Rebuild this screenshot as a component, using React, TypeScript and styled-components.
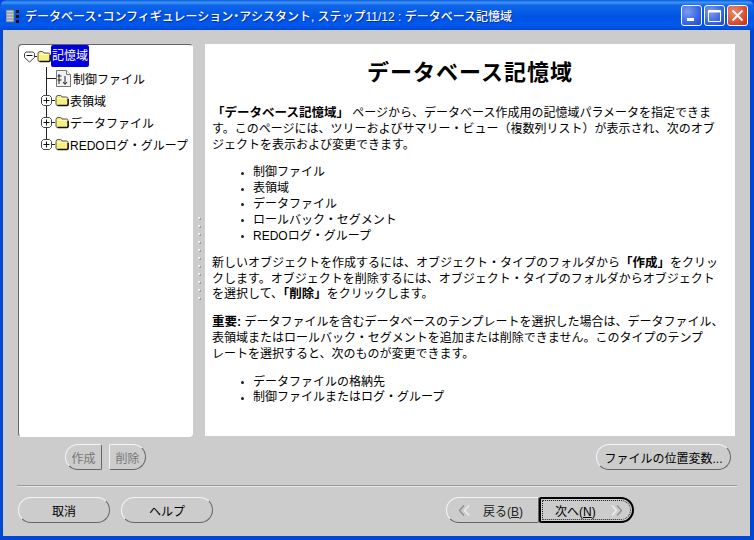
import React from 'react';
import styled, { createGlobalStyle } from 'styled-components';

const GlobalStyle = createGlobalStyle`
  html, body {
    margin: 0;
    padding: 0;
    background: #cccccc;
  }
  body {
    font-family: "Liberation Sans", "Noto Sans CJK JP", sans-serif;
    font-size: 12px;
    color: #000;
  }
`;

const Win = styled.div`
  width: 754px;
  height: 540px;
  display: flex;
  flex-direction: column;
  overflow: hidden;
  background: #0047d6;
`;

const TitleBar = styled.div`
  flex: 0 0 30px;
  display: flex;
  align-items: center;
  padding: 1px 6px 0 6px;
  box-sizing: border-box;
  border-radius: 7px 7px 0 0;
  background: linear-gradient(180deg, #0a5be0 0, #3f94f5 8%, #0f66ea 18%, #0054e3 55%, #0058ee 85%, #0048d0 100%);
`;

const TitleText = styled.div`
  flex: 1;
  margin-left: 5px;
  color: #fff;
  font-size: 12px;
  font-weight: 500;
  white-space: nowrap;
  text-shadow: 1px 1px 0 #0a2f9c;
`;

const TitleDot = styled.span`
  font-feature-settings: "palt";
`;

const WinButtons = styled.div`
  display: flex;
  gap: 2px;
`;

const WinButton = styled.div<{ $close?: boolean }>`
  width: 21px;
  height: 21px;
  box-sizing: border-box;
  border: 1px solid #fff;
  border-radius: 3px;
  display: flex;
  align-items: center;
  justify-content: center;
  background: ${(p) =>
    p.$close
      ? 'radial-gradient(circle at 30% 30%, #ee8a6a, #d2472a 70%, #b83214)'
      : 'radial-gradient(circle at 30% 30%, #7a9cf0, #2f5ee0 70%, #2248c8)'};
`;

const Frame = styled.div`
  flex: 1;
  margin: 0 4px 4px 3px;
  background: #cccccc;
  display: flex;
  flex-direction: column;
  padding: 14px 12px 0 15px;
  min-height: 0;
`;

const Panes = styled.div`
  flex: 0 0 393px;
  display: flex;
  min-height: 0;
`;

const TreePane = styled.div`
  flex: 0 0 175px;
  box-sizing: border-box;
  background: #fff;
  border: 1px solid #fff;
  border-top-color: #666;
  border-left-color: #666;
  border-radius: 4px;
  padding: 0 0 0 5px;
  overflow: hidden;
`;

const TreeRow = styled.div`
  height: 22px;
  display: flex;
  align-items: center;
  white-space: nowrap;
  font-size: 12px;
`;

const SelectedLabel = styled.span`
  background: #0000e0;
  color: #fff;
  height: 22px;
  line-height: 22px;
  padding: 0 1px;
  border-radius: 2px;
`;

const TreeLabel = styled.span<{ $gap?: number }>`
  margin-left: ${(p) => p.$gap ?? 1}px;
`;

const VGuide = styled.div`
  height: 77px;
  border-left: 1px solid #222;
  margin-left: 22px;
`;

const ChildRow = styled(TreeRow)`
  margin-left: -6px;
`;

const FileRow = styled(TreeRow)`
  margin-left: 0;
`;

const Splitter = styled.div`
  flex: 0 0 12px;
  display: flex;
  flex-direction: column;
  align-items: center;
  justify-content: center;
  gap: 6px;
  padding-top: 34px;
`;

const Dot = styled.span`
  width: 2px;
  height: 2px;
  background: #eeeeee;
  box-shadow: 1px 1px 0 #999;
`;

const HelpPane = styled.div`
  flex: 0 0 530px;
  box-sizing: border-box;
  height: 392px;
  background: #fff;
  padding: 14px 7px 0 7px;
  overflow: hidden;
`;

const Heading = styled.h1`
  margin: 0 0 18px 0;
  font-size: 22px;
  line-height: 30px;
  font-weight: bold;
  text-align: center;
  letter-spacing: 1px;
`;

const Para = styled.p`
  margin: 0 0 12px 0;
  font-size: 12px;
  line-height: 15.8px;
  white-space: nowrap;
  b {
    font-size: 12.5px;
  }
`;

const List = styled.ul`
  margin: 0 0 11.5px 0;
  padding: 0 0 0 29px;
  list-style: none;
  font-size: 12px;
  line-height: 15.8px;
`;

const ListItem = styled.li`
  display: flex;
  align-items: center;
  gap: 9px;
  &::before {
    content: '';
    width: 3px;
    height: 3px;
    border-radius: 50%;
    background: #222;
  }
`;

const ToolRow = styled.div`
  flex: 0 0 26px;
  margin-top: 7px;
  display: flex;
  align-items: center;
  padding-left: 47px;
  padding-right: 7px;
`;

const Spacer = styled.div`
  flex: 1;
`;

const Btn = styled.div<{ $w: number; $side?: 'leftOnly' | 'rightOnly'; $off?: boolean }>`
  width: ${(p) => p.$w}px;
  height: 26px;
  box-sizing: border-box;
  display: flex;
  align-items: center;
  justify-content: center;
  white-space: nowrap;
  font-size: 12px;
  color: ${(p) => (p.$off ? '#777' : '#000')};
  background: #cccccc;
  border: 1px solid;
  border-color: #f4f4f4 #666 #666 #f4f4f4;
  border-radius: ${(p) =>
    p.$side === 'leftOnly' ? '13px 2px 2px 13px' : p.$side === 'rightOnly' ? '2px 13px 13px 2px' : '13px'};
`;

const SmallGap = styled.div`
  width: 7px;
`;

const Divider = styled.div`
  flex: 0 0 2px;
  margin: 15px 0 0 -1px;
  width: 720px;
  background: #999999;
  border-bottom: 1px solid #e4e4e4;
  box-sizing: border-box;
`;

const FooterRow = styled.div`
  flex: 0 0 26px;
  margin-top: 10px;
  display: flex;
  align-items: center;
`;

const FooterGap = styled.div`
  width: 11px;
`;

const NavGroup = styled.div`
  display: flex;
  margin-right: 104px;
`;

const NextBtn = styled(Btn)`
  border: 2px solid #000;
  padding: 1px;
`;

const FocusRing = styled.div`
  flex: 1;
  height: 100%;
  border: 1px dotted #222;
  border-radius: 1px 10px 10px 1px;
  display: flex;
  align-items: center;
  justify-content: space-between;
  padding: 0 7px 0 12px;
  box-sizing: border-box;
`;

const BackInner = styled.div`
  flex: 1;
  display: flex;
  align-items: center;
  justify-content: space-between;
  padding: 0 15px 0 11px;
  color: #222;
`;

const Mnemonic = styled.span`
  text-decoration: underline;
`;

const Expander = ({ minus, width }: { minus?: boolean; width: number }) => (
  <svg width={width} height="13" viewBox={`0 0 ${width} 13`} style={{ flex: 'none' }}>
    <line x1="10" y1="6.5" x2={width} y2="6.5" stroke="#222" />
    <path
      d={minus ? 'M0.5 3.5l1.5-1.5h7l1.5 1.5v4l-5 4.5-5-4.5z' : 'M0.5 3.5l2-2h6l2 2v6l-2 2h-6l-2-2z'}
      fill="#fff"
      stroke="#444"
    />
    <line x1="2.5" y1={minus ? 5.5 : 6.5} x2="8.5" y2={minus ? 5.5 : 6.5} stroke="#111" />
    {!minus && <line x1="5.5" y1="3.5" x2="5.5" y2="9.5" stroke="#111" />}
  </svg>
);

const Folder = () => (
  <svg width="14" height="13" viewBox="0 0 14 13" style={{ flex: 'none' }}>
    <path
      d="M1 3.5q0-2 2-2h2.5q1 0 1.5 1.5h4.5q1.5 0 1.5 1.5v5.5q0 1.5-1.5 1.5h-9q-1.5 0-1.5-1.5z"
      fill="#f8f07c"
      stroke="#555"
    />
    <path d="M2.5 11.5h9.5q1.2 0 1.2-1.5v-5" fill="none" stroke="#111" strokeWidth="1.4" />
    <path d="M2.5 4.5h8.5" stroke="#fffccf" />
  </svg>
);

const FileIcon = () => (
  <svg width="15" height="17" viewBox="0 0 15 17" style={{ flex: 'none' }}>
    <path d="M0.5 0.5h10l4 4v12h-14z" fill="#f2f2f2" stroke="#777" />
    <path d="M10.5 0.5v4h4" fill="#fff" stroke="#777" />
    <path d="M3 4v10M5.5 6h-4M5.5 10h-4M9 6v8M7 12l2 2.5 2-2.5" fill="none" stroke="#222" />
  </svg>
);

const HLine = ({ w }: { w: number }) => (
  <svg width={w} height="3" viewBox={`0 0 ${w} 3`} style={{ flex: 'none' }}>
    <line x1="0" y1="1.5" x2={w} y2="1.5" stroke="#222" />
  </svg>
);

const Chevrons = ({ left }: { left?: boolean }) => (
  <svg width="13" height="13" viewBox="0 0 13 13" style={{ flex: 'none' }}>
    <g transform={left ? undefined : 'matrix(-1 0 0 1 13 0)'} fill="none" stroke="#8f8f8f" strokeWidth="1.3">
      <path d="M6 1.5L1.5 6.5 6 11.5" />
      <path d="M11 1.5L6.5 6.5 11 11.5" stroke="#f0f0f0" />
    </g>
  </svg>
);

const bullets1 = ['制御ファイル', '表領域', 'データファイル', 'ロールバック・セグメント', 'REDOログ・グループ'];
const bullets2 = ['データファイルの格納先', '制御ファイルまたはログ・グループ'];
const folders = ['表領域', 'データファイル', 'REDOログ・グループ'];

export default function App() {
  return (
    <>
      <GlobalStyle />
      <Win>
        <TitleBar>
          <svg width="14" height="16" viewBox="0 0 14 16" style={{ flex: 'none' }}>
            <rect x="0" y="2" width="8" height="12" fill="#c8ccd0" stroke="#5a6a80" />
            <path d="M1 5h6M1 8h6M1 11h6" stroke="#7a8a9a" />
            <rect x="10" y="2" width="3" height="3" fill="#111" />
            <rect x="10" y="7" width="3" height="3" fill="#111" />
            <rect x="10" y="12" width="3" height="3" fill="#111" />
          </svg>
          <TitleText>
            データベース<TitleDot>・</TitleDot>コンフィギュレーション<TitleDot>・</TitleDot>アシスタント, ステップ11/12 : データベース記憶域
          </TitleText>
          <WinButtons>
            <WinButton>
              <svg width="13" height="13" viewBox="0 0 13 13">
                <rect x="2" y="9" width="7" height="3" fill="#fff" />
              </svg>
            </WinButton>
            <WinButton>
              <svg width="15" height="15" viewBox="0 0 15 15">
                <path d="M1.5 2.5h12v11h-12z" fill="none" stroke="#fff" />
                <path d="M1.5 3.5h12" stroke="#fff" strokeWidth="2" />
              </svg>
            </WinButton>
            <WinButton $close>
              <svg width="15" height="15" viewBox="0 0 15 15">
                <path d="M2.5 2.5l10 10M12.5 2.5l-10 10" stroke="#fff" strokeWidth="2" />
              </svg>
            </WinButton>
          </WinButtons>
        </TitleBar>
        <Frame>
          <Panes>
            <TreePane>
              <TreeRow>
                <Expander minus width={13} />
                <Folder />
                <SelectedLabel>記憶域</SelectedLabel>
              </TreeRow>
              <VGuide>
                <FileRow>
                  <HLine w={9} />
                  <FileIcon />
                  <TreeLabel $gap={2}>制御ファイル</TreeLabel>
                </FileRow>
                {folders.map((name) => (
                  <ChildRow key={name}>
                    <Expander width={14} />
                    <Folder />
                    <TreeLabel>{name}</TreeLabel>
                  </ChildRow>
                ))}
              </VGuide>
            </TreePane>
            <Splitter>
              {Array.from({ length: 11 }).map((_, i) => (
                <Dot key={i} />
              ))}
            </Splitter>
            <HelpPane>
              <Heading>データベース記憶域</Heading>
              <Para>
                <b>「データベース記憶域」</b> ページから、データベース作成用の記憶域パラメータを指定できま
                <br />
                す。このページには、ツリーおよびサマリー・ビュー（複数列リスト）が表示され、次のオブ
                <br />
                ジェクトを表示および変更できます。
              </Para>
              <List>
                {bullets1.map((t) => (
                  <ListItem key={t}>{t}</ListItem>
                ))}
              </List>
              <Para>
                新しいオブジェクトを作成するには、オブジェクト・タイプのフォルダから<b>「作成」</b>をクリッ
                <br />
                クします。オブジェクトを削除するには、オブジェクト・タイプのフォルダからオブジェクト
                <br />
                を選択して、<b>「削除」</b>をクリックします。
              </Para>
              <Para>
                <b>重要:</b> データファイルを含むデータベースのテンプレートを選択した場合は、データファイル、
                <br />
                表領域またはロールバック・セグメントを追加または削除できません。このタイプのテンプ
                <br />
                レートを選択すると、次のものが変更できます。
              </Para>
              <List>
                {bullets2.map((t) => (
                  <ListItem key={t}>{t}</ListItem>
                ))}
              </List>
            </HelpPane>
          </Panes>
          <ToolRow>
            <Btn $w={37} $off $side="leftOnly">作成</Btn>
            <SmallGap />
            <Btn $w={37} $off $side="rightOnly">削除</Btn>
            <Spacer />
            <Btn $w={135}>ファイルの位置変数...</Btn>
          </ToolRow>
          <Divider />
          <FooterRow>
            <Btn $w={92}>取消</Btn>
            <FooterGap />
            <Btn $w={92}>ヘルプ</Btn>
            <Spacer />
            <NavGroup>
              <Btn $w={93} $side="leftOnly">
                <BackInner>
                  <Chevrons left />
                  <span>
                    戻る(<Mnemonic>B</Mnemonic>)
                  </span>
                </BackInner>
              </Btn>
              <NextBtn $w={95} $side="rightOnly">
                <FocusRing>
                  <span>
                    次へ(<Mnemonic>N</Mnemonic>)
                  </span>
                  <Chevrons />
                </FocusRing>
              </NextBtn>
            </NavGroup>
          </FooterRow>
        </Frame>
      </Win>
    </>
  );
}
